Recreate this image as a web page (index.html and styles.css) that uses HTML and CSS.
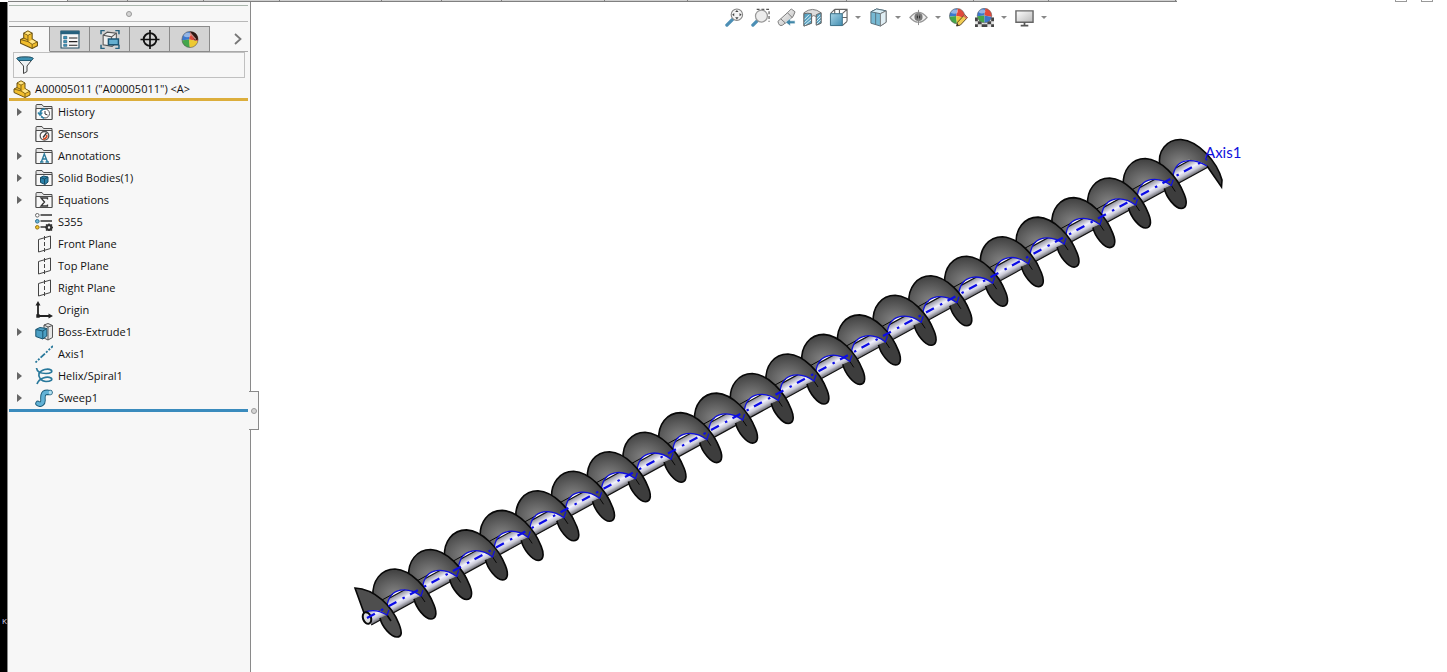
FILE: index.html
```html
<!DOCTYPE html>
<html lang="en">
<head>
<meta charset="utf-8">
<title>A00005011</title>
<link rel="stylesheet" href="styles.css">
</head>
<body>
<svg class="defs" aria-hidden="true">
  <defs>
    <radialGradient id="gFan" cx="0.34" cy="0.5" r="0.5">
      <stop offset="0" stop-color="#848484"/><stop offset="0.5" stop-color="#626262"/><stop offset="1" stop-color="#3f3f3f"/>
    </radialGradient>
    <linearGradient id="gShaft" gradientUnits="userSpaceOnUse" x1="363" y1="612" x2="370.200" y2="625.160">
      <stop offset="0" stop-color="#8c8c98"/><stop offset="0.45" stop-color="#f2f2ff"/><stop offset="0.7" stop-color="#cacad6"/><stop offset="1" stop-color="#606066"/>
    </linearGradient>
    <linearGradient id="gBlue" x1="0" y1="0" x2="1" y2="1">
      <stop offset="0" stop-color="#a9d4e6"/><stop offset="1" stop-color="#3f8cb0"/>
    </linearGradient>
    <linearGradient id="gGray" x1="0" y1="0" x2="1" y2="1">
      <stop offset="0" stop-color="#fff"/><stop offset="1" stop-color="#b8b8b8"/>
    </linearGradient>
    <clipPath id="ballClip"><circle cx="10" cy="10" r="8.500"/></clipPath>
    <symbol id="part" viewBox="0 0 18 18">
      <path d="M1 9 4 7.500V3l4-2.200 4 2.200v5.500l5 3v3.500l-5 2.500L1 12.500z" fill="#f1bd2c" stroke="#6b5314" stroke-linejoin="round"/>
      <path d="M4 3l4 2 4-2M8 5v6L1 9M8 11l4 2.500 5-2.300M12 13.500v4M4 7.500l4 2" fill="none" stroke="#6b5314" stroke-width=".8"/>
      <path d="M5 3 8 1.500 11 3 8 4.500zM9 10.800l3-1.800 3.500 2.300-3.300 1.700z" fill="#ffe68a"/>
    </symbol>
    <symbol id="folder" viewBox="0 0 18 18">
      <path d="M1 16.500v-14q0-1 1-1h5l1.500 2H17v13z" fill="#e4e4e4" stroke="#4c4c4c"/>
      <path d="M1 5.500h16v11H1z" fill="#f8f8f8" stroke="#4c4c4c"/>
    </symbol>
    <symbol id="history" viewBox="0 0 18 18">
      <use href="#folder"/><circle cx="10" cy="10.500" r="4.500" fill="#fff" stroke="#555"/>
      <path d="M10 8v3l2.500 1" fill="none" stroke="#333"/><path d="M10 6c-4 0-5 2-5 5M3 9.500 5 12l2.300-2.500M6 13.500l3 1.800" fill="none" stroke="#2c83a8" stroke-width="1.500"/>
    </symbol>
    <symbol id="sensors" viewBox="0 0 18 18">
      <use href="#folder"/><circle cx="9.500" cy="10.800" r="4.300" fill="#fff" stroke="#555" stroke-width="1.300"/>
      <path d="M12.500 9.500a4 4 0 0 1-5 5l1-1.500a2.500 2.500 0 0 0 2.500-3z" fill="#d44a22"/><path d="m8 12.500 3.500-4.500" stroke="#333" stroke-width="1.300"/>
    </symbol>
    <symbol id="annotations" viewBox="0 0 18 18">
      <use href="#folder"/><path d="M5 15h3.500M10.500 15H14M6.300 15 9.300 7l3.200 8M7.500 12h4" fill="none" stroke="#2c7c9e" stroke-width="1.400"/>
    </symbol>
    <symbol id="bodies" viewBox="0 0 18 18">
      <use href="#folder"/><path d="m5.500 8.500 3-1.500 4.500 1v5L10 15.500l-4.500-2z" fill="#2b81a8" stroke="#174d66"/><path d="m5.500 8.500 4 1.500 3.500-2M9.500 10v5" fill="none" stroke="#174d66"/>
    </symbol>
    <symbol id="equations" viewBox="0 0 18 18">
      <use href="#folder"/><path d="M12.500 8.500V7H6l3.500 4L6 15h6.500v-1.500" fill="none" stroke="#333" stroke-width="1.300"/>
    </symbol>
    <symbol id="material" viewBox="0 0 18 18">
      <path d="M5.500 2h11.500M5.500 8h11.500M5.500 14h6" stroke="#333" stroke-width="1.600"/>
      <circle cx="2.300" cy="2.300" r="1.800" fill="#fff" stroke="#666"/><circle cx="2.300" cy="8.300" r="1.800" fill="#6db6d8" stroke="#2c6f8f"/><circle cx="2.300" cy="14.300" r="1.800" fill="#f1c52c" stroke="#957213"/>
      <circle cx="14" cy="14.500" r="2.300" fill="none" stroke="#333" stroke-width="2.200"/><path d="M14 10.500v1.500M14 17v1M10 14.500h1.500M16.500 14.500H18M11 11.500l1.200 1.200M17 11.500l-1.200 1.200M11 17.500l1.200-1.200M17 17.500l-1.200-1.200" stroke="#333" stroke-width="1.400"/>
    </symbol>
    <symbol id="plane" viewBox="0 0 18 18">
      <path d="M3.500 4.500 15.500 1v12.500L3.500 17z" fill="none" stroke="#444"/><path d="M9.500 1v17" stroke="#444" stroke-dasharray="4 2"/>
    </symbol>
    <symbol id="origin" viewBox="0 0 18 18">
      <path d="M3 3v12h12" fill="none" stroke="#222" stroke-width="1.800"/><path d="m.5 4.500 2.500-4.500 2.500 4.500zM13.500 12.500 18 15l-4.500 2.500zM1.300 13.300h3.400v3.400H1.300z" fill="#222"/>
    </symbol>
    <symbol id="extrude" viewBox="0 0 18 18">
      <path d="m9 2 4-1.500 4.500 2v12L13 17l-4-2z" fill="#e6e6e6" stroke="#555"/><path d="M13 4v13M9 2l4 2 4.500-1.500" fill="none" stroke="#555"/>
      <path d="m.8 6.500 4-2 7 1v7.500l-4 3-7-2.500z" fill="#4b9fc4" stroke="#1a5570"/><path d="m.8 6.500 7 1.500 4-2.500M7.800 8v8" fill="none" stroke="#1a5570"/>
    </symbol>
    <symbol id="axis" viewBox="0 0 18 18">
      <path d="M.5 17.500 18 1" stroke="#28789b" stroke-width="1.800" stroke-dasharray="2 1.500 2 1.500 6 1.500"/>
    </symbol>
    <symbol id="helix" viewBox="0 0 18 18">
      <path d="M1.500 1C2 5 6 6.500 11 6.500 16 6.500 18 4.500 16 3 13 1 6 2.500 4 6.500 3 10 6 14.500 11 14.500 16 14.500 18 12.500 16 11 12 9 4 11 2 17" fill="none" stroke="#28789b" stroke-width="1.700"/>
    </symbol>
    <symbol id="sweep" viewBox="0 0 18 18">
      <path d="M3 14.500C6 16.500 8 14 8 11.500S7 4.500 10.500 3.500 13 4 15 3.500" fill="none" stroke="#1c5c7a" stroke-width="5.500" stroke-linecap="round"/>
      <path d="M3 14.500C6 16.500 8 14 8 11.500S7 4.500 10.500 3.500 13 4 15 3.500" fill="none" stroke="#62b2d6" stroke-width="3.600" stroke-linecap="round"/>
      <ellipse cx="15.300" cy="3.500" rx="1.500" ry="2" fill="#b4dff0"/>
    </symbol>
    <symbol id="ball" viewBox="0 0 20 20">
      <g clip-path="url(#ballClip)">
        <path d="M0 0h11L9 10 0 11z" fill="#3b78cf"/><path d="M11 0h9v12L9 10z" fill="#e04a3c"/><path d="M0 11l9-1 1 10H0z" fill="#44a64b"/><path d="M9 10l11 2v8H10z" fill="#edc931"/>
        <ellipse cx="7" cy="5" rx="4" ry="2.500" fill="#fff" opacity=".45"/>
      </g>
      <circle cx="10" cy="10" r="8.500" fill="none" stroke="#555" stroke-width=".6"/>
    </symbol>
    <symbol id="scene-ball" viewBox="0 0 20 20">
      <g clip-path="url(#ballClip)">
        <path d="M0 0h11L10 10 0 11z" fill="#3b78cf"/><path d="M11 0h9v12L10 10z" fill="#e04a3c"/><path d="M0 11l10-1v10H0z" fill="#44a64b"/><path d="M10 10l10 2v8H10z" fill="#3d76cb"/>
        <ellipse cx="7" cy="5" rx="4" ry="2.500" fill="#fff" opacity=".45"/>
      </g>
      <circle cx="10" cy="10" r="8.500" fill="none" stroke="#555" stroke-width=".6"/>
    </symbol>
    <g id="flight">
      <path d="M-8 37-22 27C-23 12-14 0 0 0 16 1 32 18 39 36 43 46 40 50 36 50 30 50 21 39 19 30L26 27C14 18-5 17-8 37z" fill="url(#gFan)"/>
      <path d="M19 30 26 27 34 24 39 36C43 46 40 50 36 50 30 50 21 39 19 30z" fill="#3d3d3d"/>
      <path d="M-22 27C-23 12-14 0 0 0 16 1 32 18 39 36 43 46 40 50 36 50 30 50 21 39 19 30" fill="none" stroke="#080808" stroke-width="1.600"/>
      <path d="M-13 31-2 25M26 27l4 6" stroke="#080808"/>
      <path d="M-8 37C-5 17 14 18 26 27L28 21" fill="none" stroke="#1010dc" stroke-width="1.300"/>
    </g>
  </defs>
</svg>

<div class="ribbon-edge" aria-hidden="true">
  <div class="ribbon-tabs"><i></i><i></i><i></i><i></i><i></i><i></i><i></i><i></i><i></i><i></i><i></i><i></i><i></i></div>
  <div class="window-keys"><i></i><i></i></div>
</div>

<div class="workspace">
  <div class="desktop-edge"><span class="desktop-letter">K</span></div>
  <aside class="manager">
    <div class="grip"><span class="dot"></span></div>
    <nav class="tabs" aria-label="Manager tabs">
      <button class="tab active" aria-label="Feature tree"><svg><use href="#part"/></svg></button>
      <button class="tab" aria-label="Properties"><svg viewBox="0 0 18 18"><path d="M.5 1h17v16H.5z" fill="#f7f7f7" stroke="#1f4d63"/><path d="M0 1h18v3H0z" fill="#26617e"/><path d="M3 6h3v2.500H3zM3 10h3v2H3zM3 13.500h3v2H3z" fill="#3b97bd" stroke="#26617e" stroke-width=".6"/><path d="M8 7.500h8M8 11h8M8 14.500h8" stroke="#222"/></svg></button>
      <button class="tab" aria-label="Configurations"><svg viewBox="0 0 18 18"><path d="M.5 4V.5H4M14 .5h3.500V4M17.500 14v3.500H14M4 17.500H.5V14" fill="none" stroke="#26617e" stroke-width="1.400"/><path d="m2.500 5 4-3 8.500 1v9l-4 3.500-8.500-1.500z" fill="#eee" stroke="#555"/><path d="m2.500 5 8 1.500 4.500-3.500M10.500 6.500v8" fill="none" stroke="#555"/><path d="M7.500 8.500H17V14H7.500z" fill="#65afd0" stroke="#1c5674" stroke-width="1.400"/></svg></button>
      <button class="tab" aria-label="Dimensions"><svg viewBox="0 0 18 18"><circle cx="9" cy="9" r="6" fill="none" stroke="#111" stroke-width="1.800"/><path d="M9 0v18M0 9h18" stroke="#111" stroke-width="1.600"/></svg></button>
      <button class="tab" aria-label="Appearances"><svg viewBox="0 0 20 20"><use href="#ball"/><path d="M10 1.700c5 0 8.400 3 8.400 8.300l-3.400 1z" fill="#2a1712"/><path d="m10 3 6 7" stroke="#c9847c" stroke-width="1.500"/></svg></button>
      <button class="more" aria-label="More tabs"><svg viewBox="0 0 8 12"><path d="m1 1 5.500 5L1 11" fill="none" stroke="#777" stroke-width="1.800"/></svg></button>
    </nav>
    <label class="filter">
      <svg viewBox="0 0 18 18"><path d="M1 2.500q0-1.500 8-1.500t8 1.500L11 10v5.500L7.500 17.500V10z" fill="#eef1f2" stroke="#444"/><path d="M1 2.500q0-1.500 8-1.500t8 1.500l-1.500 2h-13z" fill="#3c91b3" stroke="#235e77"/></svg>
      <input type="text" aria-label="Filter tree">
    </label>
    <div class="root"><svg><use href="#part"/></svg><span>A00005011 ("A00005011") &lt;A&gt;</span></div>
    <ul class="tree">
      <li><button class="twisty" aria-label="Expand History"></button><svg><use href="#history"/></svg><span>History</span></li>
      <li class="leaf"><svg><use href="#sensors"/></svg><span>Sensors</span></li>
      <li><button class="twisty" aria-label="Expand Annotations"></button><svg><use href="#annotations"/></svg><span>Annotations</span></li>
      <li><button class="twisty" aria-label="Expand Solid Bodies"></button><svg><use href="#bodies"/></svg><span>Solid Bodies(1)</span></li>
      <li><button class="twisty" aria-label="Expand Equations"></button><svg><use href="#equations"/></svg><span>Equations</span></li>
      <li class="leaf"><svg><use href="#material"/></svg><span>S355</span></li>
      <li class="leaf"><svg><use href="#plane"/></svg><span>Front Plane</span></li>
      <li class="leaf"><svg><use href="#plane"/></svg><span>Top Plane</span></li>
      <li class="leaf"><svg><use href="#plane"/></svg><span>Right Plane</span></li>
      <li class="leaf"><svg><use href="#origin"/></svg><span>Origin</span></li>
      <li><button class="twisty" aria-label="Expand Boss-Extrude1"></button><svg><use href="#extrude"/></svg><span>Boss-Extrude1</span></li>
      <li class="leaf"><svg><use href="#axis"/></svg><span>Axis1</span></li>
      <li><button class="twisty" aria-label="Expand Helix/Spiral1"></button><svg><use href="#helix"/></svg><span>Helix/Spiral1</span></li>
      <li><button class="twisty" aria-label="Expand Sweep1"></button><svg><use href="#sweep"/></svg><span>Sweep1</span></li>
    </ul>
    <div class="rollback"></div>
    <button class="splitter" aria-label="Collapse panel"><span class="dot"></span></button>
  </aside>

  <main class="viewport">
    <div class="view-tools" role="toolbar" aria-label="View">
      <button class="tool" aria-label="Zoom to fit"><svg viewBox="0 0 20 20"><path d="m2 18 6-6" stroke="#4c8fb5" stroke-width="3.500" stroke-linecap="round"/><circle cx="12.500" cy="7" r="6" fill="#f4f4f4" stroke="#888" stroke-width="1.200"/><path d="m12.500 2 1.800 2.200h-3.600zM12.500 12l1.800-2.200h-3.600zM7.500 7l2.200-1.800v3.600zM17.500 7l-2.200-1.800v3.600z" fill="#444"/></svg></button>
      <button class="tool" aria-label="Zoom to area"><svg viewBox="0 0 20 20"><path d="M6 1.500h13v13" fill="none" stroke="#555" stroke-width="1.200" stroke-dasharray="3 2"/><path d="m2 18 5-5" stroke="#4c8fb5" stroke-width="3.500" stroke-linecap="round"/><circle cx="11" cy="8.500" r="6.300" fill="#ececec" stroke="#999" stroke-width="1.300"/></svg></button>
      <button class="tool" aria-label="Previous view"><svg viewBox="0 0 20 20"><path d="M1 14 11 5l4-4 4 3-2 5-11 9q-4 2-5-4z" fill="url(#gGray)" stroke="#777"/><path d="m4 11.500 5 4.500M11 5l5 5" fill="none" stroke="#777"/><path d="m9 15 5-4v2.500h5v3h-5V19z" fill="#4087a8" stroke="#fff" stroke-width=".6"/></svg></button>
      <button class="tool" aria-label="Section view"><svg viewBox="0 0 20 20"><path d="M1 5q9-7 18 0v11l-5 2V9q-3-2-5 0v7l-8 3z" fill="#ddd" stroke="#777"/><path d="M1 6q4-1 8 0v10l-8 3zM14 7l5-2v11l-5 2z" fill="#57a2c2" stroke="#666"/><path d="m1.500 12 5-5M1.500 15.500 8.500 9M2 18l6.500-5.500M14.500 11 18 7.500M14.500 14l4-4M14.500 17l4-4" stroke="#e8f5fb"/></svg></button>
      <button class="tool" aria-label="View orientation"><svg viewBox="0 0 20 20"><path d="M6 1.500h13V14M1.500 6 6 1.500M14 6l5-4.500M14 18.500 19 14M6 1.500V6M11 1.500V6M14 10h5" fill="none" stroke="#666" stroke-width="1.200"/><path d="M1.500 6H14v12.500H1.500z" fill="url(#gBlue)" stroke="#356b84"/></svg></button>
      <button class="drop" aria-label="View orientation menu"></button>
      <button class="tool" aria-label="Display style"><svg viewBox="0 0 20 20"><path d="m2 4 6-3 10 2v12l-6 4-10-3z" fill="#77b9d3" stroke="#56707c"/><path d="m2 4 10 2 6-3-10-2z" fill="#d7edf5" stroke="#56707c"/><path d="m12 6 6-3v12l-6 4z" fill="#dfeef4" stroke="#777"/><path d="M7 5v12.500" stroke="#56707c"/></svg></button>
      <button class="drop" aria-label="Display style menu"></button>
      <button class="tool" aria-label="Hide or show items"><svg viewBox="0 0 20 20"><path d="M1 10q9-11 18 0-9 10-18 0z" fill="#eee" stroke="#999" stroke-width="1.300"/><circle cx="10" cy="9.500" r="4.300" fill="#777"/><circle cx="10" cy="9.500" r="1.800" fill="#333"/><path d="M10 2v16" stroke="#888"/></svg></button>
      <button class="drop" aria-label="Hide or show menu"></button>
      <button class="tool" aria-label="Edit appearance"><svg viewBox="0 0 20 20"><use href="#ball" x="-1" y="-1" width="19" height="19"/><path d="m8 19 1-4 7.500-8 3 3-7.500 8z" fill="#f2cd54" stroke="#5b4421"/><path d="m8 19 .7-2.500 1.700 1.700z" fill="#222"/><path d="m15 8.500 1.500-1.500 3 3-1.500 1.500z" fill="#d66f62"/></svg></button>
      <button class="tool" aria-label="Apply scene"><svg viewBox="0 0 20 20"><path d="M0 10h20v10H0z" fill="#e6e6e6"/><path d="M0 10h3v4H0zM17 10h3v4h-3zM3 14h4v3H3zM13 14h4v3h-4zM0 17h3v3H0zM7 17h6v3H7zM17 17h3v3h-3z" fill="#444"/><use href="#scene-ball" x="1" y="-1" width="18" height="18"/></svg></button>
      <button class="drop" aria-label="Scene menu"></button>
      <button class="tool" aria-label="View settings"><svg viewBox="0 0 20 20"><path d="M1 3h18v12H1z" fill="url(#gGray)" stroke="#666" stroke-width="1.500"/><path d="M10 15v3M6 18.500h8" stroke="#555" stroke-width="1.800"/></svg></button>
      <button class="drop" aria-label="View settings menu"></button>
    </div>
    <svg class="model" viewBox="250 34 1196 638" role="img" aria-label="Screw conveyor model">
      <path d="M363 612 1202 153 1209 166 370.200 625z" fill="url(#gShaft)"/>
      <path d="M363 612 1202 153M370.200 625 1209 166" stroke="#111" stroke-width="1.200"/>
      <path d="M1172 176 1158 166C1157 151 1166 139 1180 139.500 1198 141 1216 162 1221 180L1220.500 187 1206 166C1194 157 1175 156 1172 176z" fill="url(#gFan)"/>
      <path d="M1159 166C1156 151 1166 139 1180 139.500 1198 141 1216 162 1221 180L1220.500 187 1206 166" fill="none" stroke="#080808" stroke-width="1.600"/>
      <path d="M1172 176C1175 156 1194 159 1206 166" fill="none" stroke="#1010dc" stroke-width="1.300"/>
      <use href="#flight" x="1144.300" y="158.500"/>
      <use href="#flight" x="1108.600" y="178"/>
      <use href="#flight" x="1072.900" y="197.600"/>
      <use href="#flight" x="1037.100" y="217.100"/>
      <use href="#flight" x="1001.400" y="236.700"/>
      <use href="#flight" x="965.700" y="256.200"/>
      <use href="#flight" x="929.900" y="275.800"/>
      <use href="#flight" x="894.200" y="295.300"/>
      <use href="#flight" x="858.500" y="314.900"/>
      <use href="#flight" x="822.800" y="334.400"/>
      <use href="#flight" x="787" y="354"/>
      <use href="#flight" x="751.300" y="373.500"/>
      <use href="#flight" x="715.600" y="393.100"/>
      <use href="#flight" x="679.800" y="412.600"/>
      <use href="#flight" x="644.100" y="432.200"/>
      <use href="#flight" x="608.400" y="451.700"/>
      <use href="#flight" x="572.600" y="471.300"/>
      <use href="#flight" x="536.900" y="490.800"/>
      <use href="#flight" x="501.200" y="510.400"/>
      <use href="#flight" x="465.500" y="529.900"/>
      <use href="#flight" x="429.700" y="549.500"/>
      <use href="#flight" x="394" y="569"/>
      <path d="M354 588C374 589 391 606 398 624 402 634 400 637 396 637 390 637 381 627 379 618L386 615C379 609 370 609 363 613z" fill="#4e4e4e"/>
      <path d="M363 613 354 588C374 589 391 606 398 624 402 634 400 637 396 637 390 637 381 627 379 618M386 615l4 6" fill="none" stroke="#080808" stroke-width="1.600"/>
      <path d="M363 613C370 609 379 611 386 615l2-5" fill="none" stroke="#1010dc" stroke-width="1.300"/>
      <ellipse cx="366" cy="618" rx="4" ry="6" transform="rotate(-20 366 618)" fill="#ddd" stroke="#080808" stroke-width="2"/>
      <path d="M366 618 1206 159" stroke="#0c0ce6" stroke-width="2.200" stroke-dasharray="9 7 2.500 6"/>
      <text class="axis-label" x="1204" y="158">Axis1</text>
    </svg>
  </main>
</div>
</body>
</html>
```
FILE: styles.css
```css
* { box-sizing: border-box; }

body {
  margin: 0;
  min-height: 100vh;
  display: flex;
  flex-direction: column;
  background: #fff;
  color: #111;
  font: 11px/22px "Open Sans", "Noto Sans", sans-serif;
  overflow: hidden;
}

button {
  padding: 0;
  border: 0;
  background: none;
  display: flex;
  align-items: center;
  justify-content: center;
}

svg { display: block; flex: none; }
.defs { position: absolute; width: 0; height: 0; }

.ribbon-edge {
  display: flex;
  justify-content: space-between;
  height: 2px;
  padding: 0 14px 0 8px;
}
.ribbon-tabs {
  display: flex;
  width: 82%;
  border-bottom: 1px solid #808080;
  background: #d0d0d0;
}
.ribbon-tabs i { flex: 60; border-right: 1px solid #808080; }
.ribbon-tabs i:nth-child(1) { background: #f7f7f7; }
.ribbon-tabs i:nth-child(3), .ribbon-tabs i:nth-child(4), .ribbon-tabs i:nth-child(12) { flex-grow: 76; }
.ribbon-tabs i:nth-child(5), .ribbon-tabs i:nth-child(8) { flex-grow: 103; }
.ribbon-tabs i:nth-child(9) { flex-grow: 84; }
.ribbon-tabs i:nth-child(10) { flex-grow: 160; }
.ribbon-tabs i:nth-child(11), .ribbon-tabs i:nth-child(13) { flex-grow: 128; }
.window-keys { display: flex; gap: 14px; }
.window-keys i { width: 12px; border: 1px solid #999; border-top: 0; }

.workspace { flex: 1; display: flex; }

.desktop-edge {
  flex: none;
  width: 8px;
  padding-bottom: 40px;
  display: flex;
  align-items: flex-end;
  justify-content: flex-end;
  background: #000;
  border-right: 1px solid #888;
}
.desktop-letter { color: #d8d8f0; font-size: 8px; }

.manager {
  position: relative;
  flex: none;
  width: 243px;
  padding: 3px 2px 0 1px;
  background: #f7f7f7;
  border-right: 1px solid #8a8a8a;
}

.grip {
  display: flex;
  align-items: center;
  justify-content: center;
  height: 17px;
  border-top: 1px solid #a9b5ac;
  border-bottom: 1px solid #b8b8b8;
}
.dot {
  width: 6px;
  height: 6px;
  border: 1px solid #999;
  border-radius: 50%;
  background: #d4d4d4;
}

.tabs {
  display: flex;
  height: 26px;
  margin-top: 4px;
  border-bottom: 1px solid #aaa;
}
.tab {
  width: 40px;
  height: 26px;
  border: 1px solid #8a8a8a;
  border-left: 0;
  background: #d3d3d3;
}
.tab.active { width: 41px; background: #f7f7f7; border-bottom-color: #f7f7f7; }
.tab svg { width: 20px; height: 19px; }
.more { margin-left: auto; width: 20px; }
.more svg { width: 8px; height: 12px; }

.filter {
  display: flex;
  align-items: center;
  height: 26px;
  margin: 0 3px 0 4px;
  padding-left: 2px;
  border: 1px solid #c0c0c0;
}
.filter svg { width: 18px; height: 18px; }
.filter input {
  flex: 1;
  min-width: 0;
  height: 22px;
  border: 0;
  background: none;
  font: inherit;
  outline: none;
}

.root {
  display: flex;
  align-items: center;
  gap: 4px;
  height: 23px;
  padding: 2px 0 0 4px;
  border-bottom: 3px solid #dcae3c;
}
.root svg { width: 18px; height: 18px; }

.tree { list-style: none; margin: 0; padding: 0; }
.tree li { display: flex; align-items: center; height: 22px; padding-left: 8px; }
.tree li.leaf { padding-left: 26px; }
.tree svg { width: 18px; height: 18px; margin-right: 5px; }
.twisty { width: 18px; height: 18px; justify-content: flex-start; }
.twisty::before {
  content: "";
  border: solid transparent;
  border-width: 4px 0 4px 5px;
  border-left-color: #666;
}

.rollback { height: 3px; background: #3a8bbd; }

.splitter {
  position: absolute;
  left: 241px;
  top: 389px;
  width: 10px;
  height: 39px;
  background: #f7f7f7;
  border: 1px solid #8a8a8a;
  border-left: 0;
}

.viewport { flex: 1; min-width: 0; display: flex; flex-direction: column; background: #fff; }

.view-tools {
  display: flex;
  align-items: center;
  justify-content: center;
  height: 32px;
  padding: 0 0 2px 74px;
}
.tool { width: 26px; height: 24px; }
.tool svg { width: 19px; height: 19px; }
.drop { width: 14px; height: 24px; }
.drop::before {
  content: "";
  border: solid transparent;
  border-width: 3px 3px 0;
  border-top-color: #888;
}

.model { width: 100%; height: auto; }
.axis-label { font: 400 15px Lato, sans-serif; fill: #1010dc; }
```
